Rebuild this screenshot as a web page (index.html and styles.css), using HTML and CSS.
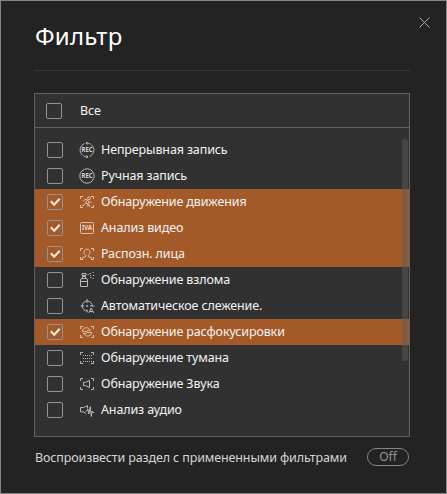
FILE: index.html
```html
<!DOCTYPE html>
<html lang="ru">
<head>
<meta charset="utf-8">
<title>Фильтр</title>
<link rel="stylesheet" href="styles.css">
</head>
<body>
<main class="dialog">
  <button class="close" aria-label="Закрыть"><svg width="11" height="11" viewBox="0 0 11 11"><path d="M.5 .5l10 10M10.5 .5l-10 10"/></svg></button>
  <h1 class="title">Фильтр</h1>
  <section class="panel">
    <label class="all"><span class="box"></span><span>Все</span></label>
    <div class="list">
      <div class="row"><span class="box"></span><svg class="icon" viewBox="0 0 16 16"><path d="M5.5 1.6A6.8 6.8 0 0 0 3.6 13.2M10.5 14.4A6.8 6.8 0 0 0 12.4 2.8M7.5 1c1.5 0 3 .4 4.2 1.3M8.5 15c-1.5 0-3-.4-4.2-1.3M9 0L7 1l1.5 1.7M7 16l2-1-1.5-1.7"/><text x="8" y="10.2" textLength="11" lengthAdjust="spacingAndGlyphs">REC</text></svg><span>Непрерывная запись</span></div>
      <div class="row"><span class="box"></span><svg class="icon" viewBox="0 0 16 16"><circle cx="8" cy="8" r="7.2"/><text x="8" y="10.2" textLength="11" lengthAdjust="spacingAndGlyphs">REC</text></svg><span>Ручная запись</span></div>
      <div class="row on"><span class="box"><svg viewBox="0 0 16 16"><path d="M3.8 7.3l3.4 3.4 5.5-6"/></svg></span><svg class="icon" viewBox="0 0 16 16"><path class="frame" d="M1.5 5V2.5H4M12 2.5h2.5V5M14.5 11v2.5H12M4 13.5H1.5V11"/><circle cx="10" cy="4.3" r="1.5"/><path d="M4 7.5l2-2.3 2.5.8 1.7 2.3h2.3M8 6.2L6.5 9l2.7 1.5-.5 2.3M6.2 9.5L5 11.3H3M9.5 8l-.8 1.8 2 1.2-.3 1.8"/></svg><span>Обнаружение движения</span></div>
      <div class="row on"><span class="box"><svg viewBox="0 0 16 16"><path d="M3.8 7.3l3.4 3.4 5.5-6"/></svg></span><svg class="icon" viewBox="0 0 16 16"><rect x="1.5" y="2.5" width="13" height="11" rx="1"/><text class="iva" x="8" y="10.3" textLength="10" lengthAdjust="spacingAndGlyphs">IVA</text></svg><span>Анализ видео</span></div>
      <div class="row on"><span class="box"><svg viewBox="0 0 16 16"><path d="M3.8 7.3l3.4 3.4 5.5-6"/></svg></span><svg class="icon" viewBox="0 0 16 16"><path class="frame" d="M1.5 5V2.5H4M12 2.5h2.5V5M14.5 11v2.5H12M4 13.5H1.5V11"/><path d="M3.7 13v-1.5l3-.8V9.5C4 7 4.8 3.2 8 3.2S12 7 9.3 9.5v1.2l3 .8V13"/></svg><span>Распозн. лица</span></div>
      <div class="row"><span class="box"></span><svg class="icon" viewBox="0 0 16 16"><path d="M1.5 8q0-1.5 1.5-1.5h4Q8.5 6.5 8.5 8v6.5h-7zM1.5 9.5h7M3.5 6.5v-2h3v2M3 1.5h4v2H3z"/><path class="dots" d="M8.5 2.5h1.2M10.5 1.5h1.2M13.5.5h1.2M11 3.5h1.2M14 3.5h1.2M13.5 6.5h1.2M11 5.5h1.2"/></svg><span>Обнаружение взлома</span></div>
      <div class="row"><span class="box"></span><svg class="icon" viewBox="0 0 16 16"><path d="M8.5 13A5 5 0 1 1 13.2 8.5M8 1v4M1.5 8H5M11 8h4.500M8 11.5v3"/><circle cx="8" cy="8" r=".6"/><path d="M9.8 15l2.400-5 2.400 5M10.8 13.5h3"/></svg><span>Автоматическое слежение.</span></div>
      <div class="row on"><span class="box"><svg viewBox="0 0 16 16"><path d="M3.8 7.3l3.4 3.4 5.5-6"/></svg></span><svg class="icon" viewBox="0 0 16 16"><path class="frame" d="M1.5 5V2.5H4M12 2.5h2.5V5M14.5 11v2.5H12M4 13.5H1.5V11"/><path d="M3.5 6C5 3 9.5 3 11.5 6.200H8.8L8 7.5H3.5zM12.5 9.7C11 12.8 6.5 12.8 4.5 9.5h2.700L8 8.5h4.500z"/></svg><span>Обнаружение расфокусировки</span></div>
      <div class="row"><span class="box"></span><svg class="icon" viewBox="0 0 16 16"><path class="frame" d="M1.5 5V2.5H4M12 2.5h2.5V5M14.5 11v2.5H12M4 13.5H1.5V11"/><path class="mist" d="M4 5.5h9M4 8.5h9M4 11.5h9"/></svg><span>Обнаружение тумана</span></div>
      <div class="row"><span class="box"></span><svg class="icon" viewBox="0 0 16 16"><path class="frame" d="M1.5 5V2.5H4M12 2.5h2.5V5M14.5 11v2.5H12M4 13.5H1.5V11"/><path d="M4.5 6.3h2.300L10.5 4.3v7.400L6.8 9.7H4.5z"/></svg><span>Обнаружение Звука</span></div>
      <div class="row"><span class="box"></span><svg class="icon" viewBox="0 0 16 16"><path d="M8.5 6.5v-3l-4 2h-3v4.300h3L7 11.5M6.7 9h1.200l1-2 1 5 1.400-7.500 1 10 .8-5.500.7 1.500h1.400"/></svg><span>Анализ аудио</span></div>
      <div class="scroll"></div>
    </div>
  </section>
  <footer class="foot"><span>Воспроизвести раздел с примененными фильтрами</span><button class="toggle">Off</button></footer>
</main>
</body>
</html>
```
FILE: styles.css
```css
* { box-sizing: border-box; }
body {
  margin: 0;
  font: 12.5px/18px "Noto Sans", sans-serif;
  letter-spacing: -.13px;
  color: #f2f2f2;
}
.dialog {
  position: relative;
  width: 447px;
  height: 494px;
  padding: 0 36px 0 33px;
  border: 1px solid #858585;
  background: #232323;
}
.close {
  position: absolute;
  top: 16px;
  right: 16px;
  width: 11px;
  height: 11px;
  padding: 0;
  border: 0;
  background: none;
}
.close svg { display: block; fill: none; stroke: #aaa; stroke-width: 1; }
.title {
  height: 70px;
  margin: 0 0 22px;
  padding: 18px 1px 0;
  border-bottom: 1px solid #363636;
  font-size: 24px;
  font-weight: 400;
  letter-spacing: .25px;
  line-height: 34px;
  color: #fff;
}
.panel {
  height: 344px;
  border: 1px solid #626262;
  background: #313131;
}
.all {
  display: flex;
  align-items: center;
  gap: 18px;
  height: 34px;
  padding-left: 11px;
  border-bottom: 1px solid #626262;
}
.list { position: relative; padding-top: 9px; }
.row {
  display: flex;
  align-items: center;
  height: 26px;
  padding-left: 12px;
}
.row.on { background: #a35a28; }
.box {
  flex: none;
  width: 16px;
  height: 16px;
  border: 1px solid #929292;
  border-radius: 2px;
}
.box svg {
  display: block;
  width: 16px;
  height: 16px;
  margin: -1px;
  fill: none;
  stroke: #f2e8e1;
  stroke-width: 2.2;
}
.icon {
  flex: none;
  width: 16px;
  height: 16px;
  margin: 0 6px 0 16px;
  fill: none;
  stroke: #b8b8b8;
  stroke-width: 1;
}
.on .icon { stroke: #dfc0aa; }
.icon text {
  font: 700 6.5px "Open Sans", sans-serif;
  letter-spacing: 0;
  text-anchor: middle;
  fill: #d8d8d8;
  stroke: none;
}
.icon .iva { font-family: "Noto Sans", sans-serif; }
.on .icon text { fill: #f0dccf; }
.mist { stroke-dasharray: 1 1; }
.scroll {
  position: absolute;
  top: 11px;
  right: 1px;
  width: 6px;
  height: 222px;
  border-radius: 3px;
  background: rgba(92, 92, 92, .5);
}
.foot {
  display: flex;
  justify-content: space-between;
  align-items: center;
  height: 40px;
  padding: 0 1px;
  white-space: nowrap;
  color: #d6d6d6;
}
.foot > span { padding-top: 2px; }
.toggle {
  width: 42px;
  height: 18px;
  padding: 0;
  border: 1px solid #858585;
  border-radius: 9px;
  background: none;
  font: 12px/16px "Noto Sans", sans-serif;
  letter-spacing: -.1px;
  color: #929292;
}
```
